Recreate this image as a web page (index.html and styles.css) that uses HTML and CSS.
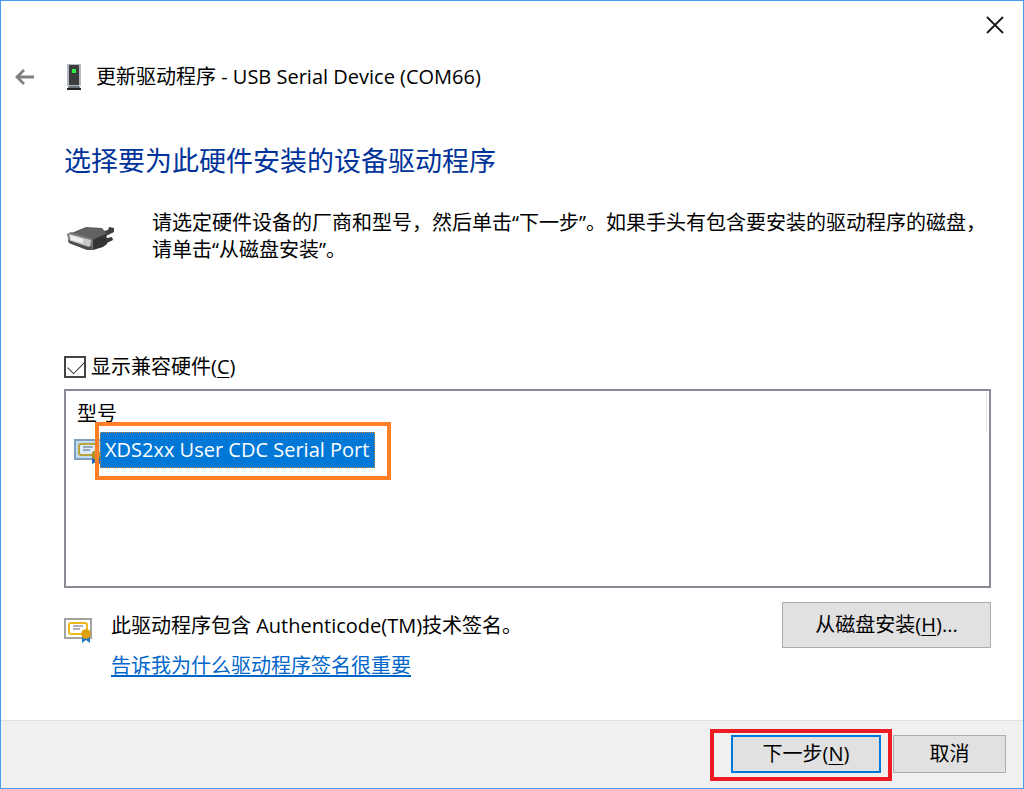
FILE: index.html
```
<!DOCTYPE html>
<html lang="zh-CN">
<head>
  <meta charset="UTF-8">
  <meta name="viewport" content="width=device-width, initial-scale=1.0">
  <title>更新驱动程序</title>
  <link rel="stylesheet" href="styles.css">
</head>
<body>
  <div class="wizard">
    <div class="caption-bar">
      <button class="close-button" type="button" aria-label="关闭">
        <svg width="18" height="18" viewBox="0 0 18 18"><path d="M1 1L17 17M17 1L1 17" stroke="#1a1a1a" stroke-width="1.8" fill="none"/></svg>
      </button>
    </div>

    <header class="title-bar">
      <button class="back-button" type="button" aria-label="返回">
        <svg width="20" height="16" viewBox="0 0 20 16"><path d="M19 8H3M9 1L2 8L9 15" stroke="#808080" stroke-width="2.8" fill="none"/></svg>
      </button>
      <svg class="device-icon" width="16" height="26" viewBox="0 0 16 26">
        <rect x="1" y="0" width="14" height="22" fill="#b4bac4"/>
        <rect x="3" y="1" width="10" height="20" fill="#3c3c3c"/>
        <rect x="6" y="5" width="4" height="4" fill="#2bf03c"/>
        <path d="M3 22H13L15 25H1Z" fill="#6c727a"/>
        <rect x="1" y="24" width="14" height="2" fill="#222"/>
      </svg>
      <span class="window-title">更新驱动程序 - USB Serial Device (COM66)</span>
    </header>

    <main class="page">
      <h1 class="heading">选择要为此硬件安装的设备驱动程序</h1>

      <div class="intro">
        <svg class="connector-icon" width="50" height="26" viewBox="0 0 50 26">
          <path d="M34 6L42 4L43 1L48 2L48 6L38 11Z" fill="#3f3f3f"/>
          <path d="M36 13L46 11L47 14L41 17L34 18Z" fill="#383838"/>
          <path d="M3 8L20 1L36 2L41 8L40 17L27 24L4 17Z" fill="#5a5a5a"/>
          <path d="M6 8L21 2L35 3L40 8L27 14Z" fill="#626262"/>
          <path d="M26 14L40 8L41 18L37 21L27 24Z" fill="#343434"/>
          <path d="M1 8L5 6L27 13L27 24L22 24L3 17Z" fill="#777"/>
          <path d="M3 8L25 14L24 21L4 15Z" fill="#c8c8c8"/>
          <path d="M4 9L17 13L17 17L5 14Z" fill="#efefef"/>
          <path d="M2 14L22 21L26 20L26 24L21 24L3 17Z" fill="#4d4d4d"/>
        </svg>
        <p class="intro-text">请选定硬件设备的厂商和型号，然后单击“下一步”。如果手头有包含要安装的驱动程序的磁盘，请单击“从磁盘安装”。</p>
      </div>

      <div class="compatible">
        <input class="compatible-check" type="checkbox" id="compatible" checked>
        <label for="compatible">显示兼容硬件(<u>C</u>)</label>
      </div>

      <div class="model-list">
        <div class="model-header">型号</div>
        <div class="model-row">
          <svg class="cert-icon" width="28" height="26" viewBox="0 0 28 26">
            <rect x="1" y="1" width="26" height="19" fill="#c3dcf3" stroke="#7fa0bd" stroke-width="2"/>
            <rect x="5" y="5" width="18" height="11" rx="2" fill="#dcebf8" stroke="#b8a63a" stroke-width="2"/>
            <path d="M9 8H19M9 11H16" stroke="#7d94ae" stroke-width="1.4"/>
            <path d="M18 18L18 25L22 23L26 25V18Z" fill="#1c64b4"/>
            <circle cx="22" cy="16" r="4.5" fill="#b39325"/>
          </svg>
          <span class="model-name">XDS2xx User CDC Serial Port</span>
          <div class="mark-orange"></div>
        </div>
      </div>

      <div class="signature">
        <svg class="signature-icon" width="28" height="26" viewBox="0 0 28 26">
          <rect x="1" y="1" width="26" height="19" fill="#fff" stroke="#a3a3a3" stroke-width="2"/>
          <rect x="5" y="5" width="18" height="11" rx="2" fill="#fff" stroke="#edb91f" stroke-width="2"/>
          <path d="M9 8H19M9 11H16" stroke="#9a9aa4" stroke-width="1.4"/>
          <path d="M18 18L18 25L22 22L26 25V18Z" fill="#2477c8"/>
          <circle cx="22" cy="16" r="4.8" fill="#dfa00e"/>
        </svg>
        <div class="signature-text">
          <span>此驱动程序包含 Authenticode(TM)技术签名。</span>
          <a href="#">告诉我为什么驱动程序签名很重要</a>
        </div>
        <button class="button disk-button" type="button">从磁盘安装(<u>H</u>)...</button>
      </div>
    </main>

    <footer class="footer">
      <div class="next-wrap">
        <button class="button next-button" type="button">下一步(<u>N</u>)</button>
        <div class="mark-red"></div>
      </div>
      <button class="button cancel-button" type="button">取消</button>
    </footer>
  </div>
</body>
</html>
```
FILE: styles.css
```
* {
  box-sizing: border-box;
}

body {
  margin: 0;
  background-color: #fff;
  color: #000;
  font-family: "Open Sans", "Noto Sans CJK SC", sans-serif;
  font-size: 20px;
  line-height: 28px;
}

button {
  font: inherit;
  color: inherit;
}

u {
  text-decoration-thickness: 1px;
  text-underline-offset: 3px;
}

.wizard {
  display: flex;
  flex-direction: column;
  min-height: 100vh;
  border: 1px solid #4a9cf0;
}

.caption-bar {
  display: flex;
  justify-content: flex-end;
  height: 48px;
}

.close-button,
.back-button {
  display: flex;
  align-items: center;
  justify-content: center;
  padding: 0;
  border: none;
  background: none;
}

.close-button {
  width: 56px;
}

/* Title row */
.title-bar {
  display: flex;
  align-items: center;
  height: 56px;
  padding-left: 14px;
}

.device-icon {
  margin: 0 14px 0 31px;
}

/* Page */
.page {
  flex: 1;
  display: flex;
  flex-direction: column;
  padding: 38px 32px 40px 63px;
}

.heading {
  margin: 0;
  color: #003399;
  font-size: 27px;
  font-weight: normal;
  line-height: 36px;
}

.intro {
  display: flex;
  align-items: flex-start;
  gap: 36px;
  height: 144px;
  margin-top: 30px;
}

.connector-icon {
  flex: none;
  margin: 17px 0 0 2px;
}

.intro-text {
  margin: 0;
  line-height: 27px;
}

.compatible {
  display: flex;
  align-items: center;
  gap: 5px;
}

.compatible-check {
  appearance: none;
  width: 22px;
  height: 22px;
  margin: 0;
  border: 2px solid #444;
  background: #fff;
}

.compatible-check:checked::before {
  content: "";
  display: block;
  width: 15px;
  height: 8px;
  margin: 3px 2px;
  border-left: 1px solid #333;
  border-bottom: 1px solid #333;
  transform: rotate(-45deg);
}

/* Driver list */
.model-list {
  flex: 1;
  min-height: 192px;
  margin-top: 8px;
  padding: 2px 2px 8px 8px;
  border: 2px solid #868b94;
}

.model-header {
  padding: 7px 0 4px 3px;
  border-right: 1px solid #e5e5e5;
}

.model-row {
  position: relative;
  display: flex;
  align-items: center;
  width: fit-content;
}

.cert-icon {
  margin: 4px -2px 0 0;
}

.model-name {
  padding: 3px 5px 3px 4px;
  border: 1px dotted #c98742;
  background-color: #0078d7;
  color: #fff;
}

.mark-orange {
  position: absolute;
  inset: -10px -16px -12px 21px;
  border: 4px solid #ff7f27;
}

/* Signature info */
.signature {
  display: flex;
  align-items: flex-start;
  margin-top: 14px;
}

.signature-icon {
  margin: 16px 19px 0 0;
}

.signature-text {
  flex: 1;
  display: flex;
  flex-direction: column;
  align-items: flex-start;
  gap: 12px;
  padding-top: 10px;
}

.signature-text a {
  color: #0066cc;
  text-decoration-thickness: 2px;
  text-underline-offset: 2px;
}

.button {
  padding: 0;
  border: 1px solid #adadad;
  background-color: #e1e1e1;
}

.disk-button {
  width: 209px;
  height: 46px;
}

/* Footer */
.footer {
  display: flex;
  align-items: flex-start;
  justify-content: flex-end;
  gap: 12px;
  height: 68px;
  padding: 14px 17px 0 0;
  border-top: 1px solid #dfdfdf;
  background-color: #f0f0f0;
}

.next-wrap {
  position: relative;
}

.next-button {
  display: block;
  width: 150px;
  height: 38px;
  border: 2px solid #0078d7;
}

.cancel-button {
  width: 113px;
  height: 38px;
}

.mark-red {
  position: absolute;
  inset: -6px -11px -8px -21px;
  border: 4px solid #ed1c24;
}
```
